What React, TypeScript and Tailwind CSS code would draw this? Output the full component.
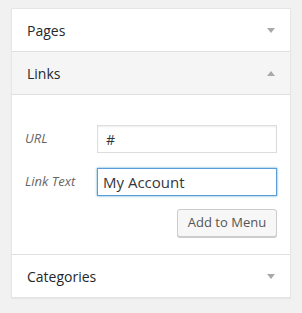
import React from "react";

function Caret({ up }: { up?: boolean }) {
  return (
    <svg width="8" height="5" viewBox="0 0 8 5" className="text-[#a7aaad]">
      {up ? <polygon points="0,5 8,5 4,0" fill="currentColor" /> : <polygon points="0,0 8,0 4,5" fill="currentColor" />}
    </svg>
  );
}

function Header({ title, open }: { title: string; open?: boolean }) {
  return (
    <div
      className={`flex h-[43px] items-center justify-between border-b border-[#dfdfdf] pl-[15px] pr-[15px] text-[14px] text-[#23282d] ${
        open ? "bg-[#f5f5f5]" : "bg-white"
      }`}
    >
      <span>{title}</span>
      <Caret up={open} />
    </div>
  );
}

export default function App() {
  return (
    <div className="h-[313px] w-[302px] bg-[#f1f1f1] pt-[8px] pl-[11px]" style={{ fontFamily: '"Open Sans", "Noto Sans", sans-serif' }}>
      <div className="w-[280px] border border-[#e5e5e5] bg-white shadow-[0_1px_1px_rgba(0,0,0,0.04)]">
        <Header title="Pages" />
        <Header title="Links" open />
        <div className="flex flex-col border-b border-[#dfdfdf] pt-[30px] pr-[13px] pb-[17px] pl-[13px]">
          <div className="flex items-center">
            <label className="w-[72px] text-[13px] italic text-[#666]">URL</label>
            <input
              readOnly
              value="#"
              className="h-[28px] w-[180px] border border-[#ddd] bg-white px-[8px] text-[14px] text-[#32373c] shadow-[inset_0_1px_2px_rgba(0,0,0,0.07)] outline-none"
            />
          </div>
          <div className="mt-[15px] flex items-center">
            <label className="w-[72px] text-[13px] italic text-[#666]">Link Text</label>
            <input
              readOnly
              value="My Account"
              className="h-[28px] w-[180px] border border-[#5b9dd9] bg-white px-[5px] text-[15px] text-[#32373c] shadow-[0_0_2px_rgba(30,140,190,0.8)] outline-none"
            />
          </div>
          <div className="mt-[13px] flex justify-end">
            <button className="h-[28px] w-[100px] rounded-[3px] border border-[#ccc] bg-[#f7f7f7] text-[13px] text-[#555] shadow-[0_1px_0_#ccc]">
              Add to Menu
            </button>
          </div>
        </div>
        <div className="flex h-[42px] items-center justify-between bg-white pl-[15px] pr-[15px] text-[14px] text-[#23282d]">
          <span>Categories</span>
          <Caret />
        </div>
      </div>
    </div>
  );
}
